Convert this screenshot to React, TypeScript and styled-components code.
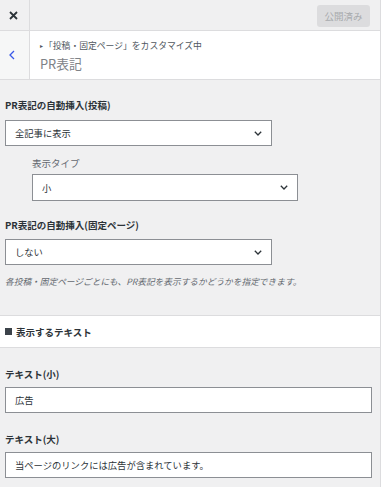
import React from "react";
import styled, { createGlobalStyle } from "styled-components";

const Global = createGlobalStyle`
  html, body { margin: 0; padding: 0; background: #f0f0f1; }
  * { box-sizing: border-box; }
  body { font-family: "Noto Sans CJK JP", "Noto Sans", sans-serif; color: #2c3338; }
`;

const Panel = styled.div`
  width: 381px;
  height: 487px;
  overflow: hidden;
  background: #f0f0f1;
  border-right: 1px solid #dcdcde;
  display: flex;
  flex-direction: column;
`;

const TopBar = styled.div`
  height: 31px;
  display: flex;
  align-items: stretch;
  border-bottom: 1px solid #dcdcde;
  background: #f0f0f1;
`;

const CloseBtn = styled.div`
  width: 30px;
  border-right: 1px solid #dcdcde;
  display: flex;
  align-items: center;
  justify-content: flex-start;
  padding-left: 9px;
`;

const TopSpacer = styled.div`
  flex: 1;
  display: flex;
  justify-content: flex-end;
  align-items: flex-start;
  padding: 5px 10px 0 0;
`;

const PublishBtn = styled.div`
  width: 53px;
  height: 22px;
  border-radius: 3px;
  background: #dcdcde;
  color: #a7aaad;
  font-size: 9.5px;
  display: flex;
  align-items: center;
  justify-content: center;
`;

const Header = styled.div`
  height: 49px;
  display: flex;
  background: #fff;
  border-bottom: 1px solid #dcdcde;
`;

const BackBtn = styled.div`
  width: 30px;
  background: #f6f7f7;
  border-right: 1px solid #dcdcde;
  display: flex;
  align-items: center;
  justify-content: flex-start;
  padding-left: 9px;
`;

const HeaderText = styled.div`
  padding: 8px 0 0 10px;
  display: flex;
  flex-direction: column;
`;

const Crumb = styled.div`
  font-size: 8.8px;
  line-height: 14px;
  color: #50575e;
  display: flex;
  align-items: center;
`;

const Bullet = styled.span`
  font-size: 6px;
  margin-right: 1px;
  color: #50575e;
`;

const Title = styled.div`
  font-size: 12.8px;
  line-height: 20px;
  color: #7e8287;
  margin-top: 1px;
`;

const Content = styled.div`
  padding: 18px 0 0 5px;
  display: flex;
  flex-direction: column;
  align-items: flex-start;
`;

const Label = styled.div<{ $mt?: number; $mb?: number; $indent?: number; $light?: boolean }>`
  font-size: 9.5px;
  line-height: 14px;
  font-weight: ${(p) => (p.$light ? 400 : 700)};
  color: ${(p) => (p.$light ? "#646970" : "#2c3338")};
  margin-top: ${(p) => p.$mt ?? 0}px;
  margin-bottom: ${(p) => p.$mb ?? 0}px;
  margin-left: ${(p) => p.$indent ?? 0}px;
`;

const Select = styled.div<{ $indent?: number; $w: number; $h?: number }>`
  width: ${(p) => p.$w}px;
  height: ${(p) => p.$h ?? 26}px;
  margin-left: ${(p) => p.$indent ?? 0}px;
  background: #fff;
  border: 1px solid #8c8f94;
  display: flex;
  align-items: center;
  justify-content: space-between;
  padding: 0 9px 0 9px;
  font-size: 9.3px;
  color: #2c3338;
`;

const TextBox = styled.div<{ $w: number; $h?: number }>`
  width: ${(p) => p.$w}px;
  height: ${(p) => p.$h ?? 26}px;
  background: #fff;
  border: 1px solid #8c8f94;
  display: flex;
  align-items: center;
  padding: 0 9px;
  font-size: 9.3px;
  color: #2c3338;
`;

const Desc = styled.div`
  margin-top: 10px;
  font-size: 8.7px;
  line-height: 14px;
  font-style: italic;
  color: #646970;
`;

const Section = styled.div`
  margin-top: 26px;
  height: 33px;
  background: #fff;
  border-top: 1px solid #dcdcde;
  border-bottom: 1px solid #dcdcde;
  display: flex;
  align-items: center;
  padding-left: 5px;
  font-size: 9.5px;
  font-weight: 700;
  color: #2c3338;
`;

const Square = styled.span`
  display: inline-block;
  width: 7px;
  height: 7px;
  background: #3c434a;
  margin-right: 4px;
`;

const Content2 = styled.div`
  padding: 19px 0 0 5px;
  display: flex;
  flex-direction: column;
  align-items: flex-start;
`;

const Chevron = () => (
  <svg width="8" height="5" viewBox="0 0 8 5">
    <path d="M0.8 0.8 L4 4 L7.2 0.8" fill="none" stroke="#2c3338" strokeWidth="1.3" />
  </svg>
);

export default function App() {
  return (
    <>
      <Global />
      <Panel>
        <TopBar>
          <CloseBtn>
            <svg width="9" height="9" viewBox="0 0 9 9">
              <path d="M1 1 L8 8 M8 1 L1 8" stroke="#2c3338" strokeWidth="1.8" />
            </svg>
          </CloseBtn>
          <TopSpacer>
            <PublishBtn>公開済み</PublishBtn>
          </TopSpacer>
        </TopBar>
        <Header>
          <BackBtn>
            <svg width="6" height="10" viewBox="0 0 6 10">
              <path d="M5 1 L1 5 L5 9" fill="none" stroke="#3858e9" strokeWidth="1.3" />
            </svg>
          </BackBtn>
          <HeaderText>
            <Crumb>
              <Bullet>▸</Bullet>「投稿・固定ページ」をカスタマイズ中
            </Crumb>
            <Title>PR表記</Title>
          </HeaderText>
        </Header>
        <Content>
          <Label $mb={8}>PR表記の自動挿入(投稿)</Label>
          <Select $w={267}>
            <span>全記事に表示</span>
            <Chevron />
          </Select>
          <Label $light $mt={10} $mb={4} $indent={27}>表示タイプ</Label>
          <Select $w={266} $h={27} $indent={27}>
            <span>小</span>
            <Chevron />
          </Select>
          <Label $mt={17} $mb={7}>PR表記の自動挿入(固定ページ)</Label>
          <Select $w={267}>
            <span>しない</span>
            <Chevron />
          </Select>
          <Desc>各投稿・固定ページごとにも、PR表記を表示するかどうかを指定できます。</Desc>
        </Content>
        <Section>
          <Square />
          表示するテキスト
        </Section>
        <Content2>
          <Label $mb={6}>テキスト(小)</Label>
          <TextBox $w={367}>広告</TextBox>
          <Label $mt={19} $mb={6}>テキスト(大)</Label>
          <TextBox $w={367}>当ページのリンクには広告が含まれています。</TextBox>
        </Content2>
      </Panel>
    </>
  );
}
